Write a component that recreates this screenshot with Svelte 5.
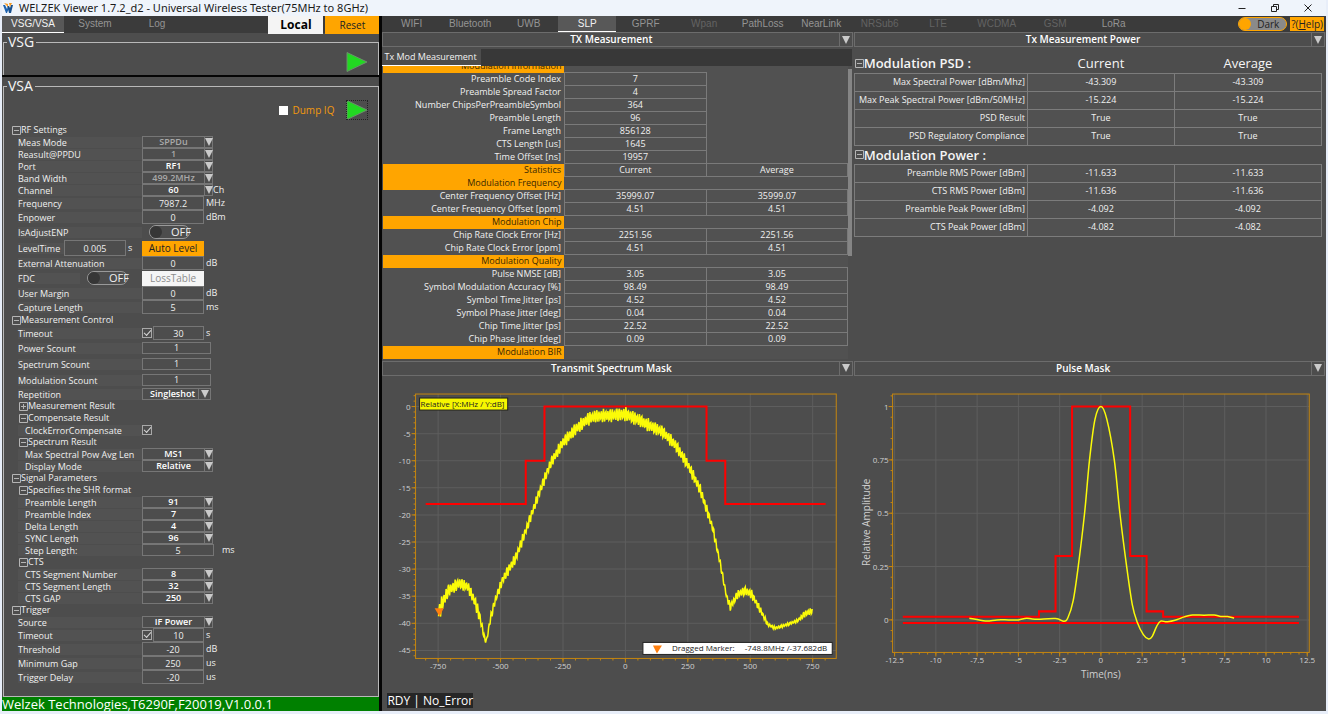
<script lang="ts">
	type Row = {
		kind: string;
		label: string;
		value?: string;
		unit?: string;
		level?: number;
		dim?: boolean;
		open?: boolean;
	};

	const settings: Row[] = [
		{ kind: 'group', label: 'RF Settings', open: true },
		{ kind: 'select', label: 'Meas Mode', value: 'SPPDu', dim: true },
		{ kind: 'select', label: 'Reasult@PPDU', value: '1', dim: true },
		{ kind: 'select', label: 'Port', value: 'RF1' },
		{ kind: 'select', label: 'Band Width', value: '499.2MHz', dim: true },
		{ kind: 'select', label: 'Channel', value: '60', unit: 'Ch' },
		{ kind: 'number', label: 'Frequency', value: '7987.2', unit: 'MHz' },
		{ kind: 'number', label: 'Enpower', value: '0', unit: 'dBm' },
		{ kind: 'toggle', label: 'IsAdjustENP' },
		{ kind: 'level', label: 'LevelTime', value: '0.005', unit: 's' },
		{ kind: 'number', label: 'External Attenuation', value: '0', unit: 'dB' },
		{ kind: 'fdc', label: 'FDC' },
		{ kind: 'number', label: 'User Margin', value: '0', unit: 'dB' },
		{ kind: 'number', label: 'Capture Length', value: '5', unit: 'ms' },
		{ kind: 'group', label: 'Measurement Control', open: true },
		{ kind: 'timeout', label: 'Timeout', value: '30', unit: 's' },
		{ kind: 'count', label: 'Power Scount', value: '1' },
		{ kind: 'count', label: 'Spectrum Scount', value: '1' },
		{ kind: 'count', label: 'Modulation Scount', value: '1' },
		{ kind: 'select', label: 'Repetition', value: 'Singleshot' },
		{ kind: 'group', label: 'Measurement Result', level: 1, open: false },
		{ kind: 'group', label: 'Compensate Result', level: 1, open: true },
		{ kind: 'check', label: 'ClockErrorCompensate', level: 1 },
		{ kind: 'group', label: 'Spectrum Result', level: 1, open: true },
		{ kind: 'select', label: 'Max Spectral Pow Avg Len', value: 'MS1', level: 1 },
		{ kind: 'select', label: 'Display Mode', value: 'Relative', level: 1 },
		{ kind: 'group', label: 'Signal Parameters', open: true },
		{ kind: 'group', label: 'Specifies the SHR format', level: 1, open: true },
		{ kind: 'select', label: 'Preamble Length', value: '91', level: 1 },
		{ kind: 'select', label: 'Preamble Index', value: '7', level: 1 },
		{ kind: 'select', label: 'Delta Length', value: '4', level: 1 },
		{ kind: 'select', label: 'SYNC Length', value: '96', level: 1 },
		{ kind: 'step', label: 'Step Length:', value: '5', unit: 'ms', level: 1 },
		{ kind: 'group', label: 'CTS', level: 1, open: true },
		{ kind: 'select', label: 'CTS Segment Number', value: '8', level: 1 },
		{ kind: 'select', label: 'CTS Segment Length', value: '32', level: 1 },
		{ kind: 'select', label: 'CTS GAP', value: '250', level: 1 },
		{ kind: 'group', label: 'Trigger', open: true },
		{ kind: 'select', label: 'Source', value: 'IF Power' },
		{ kind: 'timeout', label: 'Timeout', value: '10', unit: 's' },
		{ kind: 'number', label: 'Threshold', value: '-20', unit: 'dB' },
		{ kind: 'number', label: 'Minimum Gap', value: '250', unit: 'us' },
		{ kind: 'number', label: 'Trigger Delay', value: '-20', unit: 'us' }
	];

	const tabs = ['WIFI', 'Bluetooth', 'UWB', 'SLP', 'GPRF', 'Wpan', 'PathLoss', 'NearLink', 'NRSub6', 'LTE', 'WCDMA', 'GSM', 'LoRa'];
	const disabledTabs = ['Wpan', 'NRSub6', 'LTE', 'WCDMA', 'GSM'];
	let activeTab = $state('SLP');
	let activeSide = $state('VSG/VSA');

	// one value spans a single cell, two values are current and average
	const modulation: { name: string; values?: string[]; head?: boolean }[] = [
		{ name: 'Modulation Information', head: true },
		{ name: 'Preamble Code Index', values: ['7'] },
		{ name: 'Preamble Spread Factor', values: ['4'] },
		{ name: 'Number ChipsPerPreambleSymbol', values: ['364'] },
		{ name: 'Preamble Length', values: ['96'] },
		{ name: 'Frame Length', values: ['856128'] },
		{ name: 'CTS Length [us]', values: ['1645'] },
		{ name: 'Time Offset [ns]', values: ['19957'] },
		{ name: 'Statistics', head: true, values: ['Current', 'Average'] },
		{ name: 'Modulation Frequency', head: true },
		{ name: 'Center Frequency Offset [Hz]', values: ['35999.07', '35999.07'] },
		{ name: 'Center Frequency Offset [ppm]', values: ['4.51', '4.51'] },
		{ name: 'Modulation Chip', head: true },
		{ name: 'Chip Rate Clock Error [Hz]', values: ['2251.56', '2251.56'] },
		{ name: 'Chip Rate Clock Error [ppm]', values: ['4.51', '4.51'] },
		{ name: 'Modulation Quality', head: true },
		{ name: 'Pulse NMSE [dB]', values: ['3.05', '3.05'] },
		{ name: 'Symbol Modulation Accuracy [%]', values: ['98.49', '98.49'] },
		{ name: 'Symbol Time Jitter [ps]', values: ['4.52', '4.52'] },
		{ name: 'Symbol Phase Jitter [deg]', values: ['0.04', '0.04'] },
		{ name: 'Chip Time Jitter [ps]', values: ['22.52', '22.52'] },
		{ name: 'Chip Phase Jitter [deg]', values: ['0.09', '0.09'] },
		{ name: 'Modulation BIR', head: true }
	];

	const power = [
		{
			title: 'Modulation PSD :',
			rows: [
				['Max Spectral Power [dBm/Mhz]', '-43.309'],
				['Max Peak Spectral Power [dBm/50MHz]', '-15.224'],
				['PSD Result', 'True'],
				['PSD Regulatory Compliance', 'True']
			]
		},
		{
			title: 'Modulation Power :',
			rows: [
				['Preamble RMS Power [dBm]', '-11.633'],
				['CTS RMS Power [dBm]', '-11.636'],
				['Preamble Peak Power [dBm]', '-4.092'],
				['CTS Peak Power [dBm]', '-4.082']
			]
		}
	];

	const range = (from: number, to: number, step: number) =>
		Array.from({ length: Math.round((to - from) / step) + 1 }, (_, i) => from + i * step);

	const polyline = (points: number[][], fx: (v: number) => number, fy: (v: number) => number) =>
		points.map(([x, y]) => `${fx(x).toFixed(1)},${fy(y).toFixed(1)}`).join(' ');

	// transmit spectrum
	const sx = (mhz: number) => 242.5 + mhz * 0.2493;
	const sy = (db: number) => 30.5 - db * 5.41;
	const spectrumMask = [
		[-800, -18], [-399, -18], [-399, -10], [-324, -10], [-324, 0],
		[325, 0], [325, -10], [400, -10], [400, -18], [802, -18]
	];

	// MHz, level in dB, ripple in dB
	const envelope = [
		[-748, -38.2, 1], [-740, -37, 1.8], [-710, -34, 1.3], [-665, -32.6, 1.2], [-630, -33.3, 1],
		[-600, -36.3, 1.3], [-580, -39.4, 1.1], [-563, -43, 0.5], [-556, -43.2, 0.5], [-540, -39, 0.9],
		[-520, -35.5, 0.8], [-490, -31.8, 1], [-440, -28, 1.1], [-400, -23, 1], [-350, -16.5, 1],
		[-300, -10.5, 1.1], [-250, -6.6, 1.2], [-200, -4.2, 1.3], [-150, -2.3, 1.3], [-120, -1.8, 1.3],
		[-50, -1.6, 1.3], [0, -1.4, 1.4], [50, -2.4, 1.3], [100, -3.6, 1.3], [150, -4.7, 1.2],
		[200, -7.1, 1.2], [250, -10.7, 1.1], [300, -15.4, 1.1], [350, -22.5, 0.9], [380, -29, 0.7],
		[405, -35, 0.6], [420, -37, 0.8], [450, -34.6, 0.8], [480, -34, 0.9], [505, -34.6, 0.9],
		[540, -37.5, 0.7], [570, -40.2, 0.4], [600, -40.9, 0.3], [650, -40.2, 0.3], [690, -39.5, 0.3],
		[720, -38.2, 0.7], [748, -37.7, 0.6]
	];

	const spectrum = range(-748, 748, 2).map((f, i) => {
		const k = Math.max(1, envelope.findIndex((p) => p[0] >= f));
		const [a, b] = [envelope[k - 1], envelope[k]];
		const t = (f - a[0]) / (b[0] - a[0]);
		const level = a[1] + (b[1] - a[1]) * t;
		const ripple = a[2] + (b[2] - a[2]) * t;
		const wave = Math.sin((f * Math.PI * 2) / 9) * (0.8 + 0.2 * Math.sin(i * 12.9898));
		return [f, level + ripple * wave];
	});

	// pulse
	const px = (ns: number) => 246 + ns * 16.48;
	const py = (amp: number) => 243.5 - amp * 213;
	const pulseMask = [
		[-12, 0.015], [-3.75, 0.015], [-3.75, 0.04], [-2.75, 0.04], [-2.75, 0.3], [-1.75, 0.3], [-1.75, 1],
		[1.77, 1], [1.77, 0.3], [2.77, 0.3], [2.77, 0.04], [3.77, 0.04], [3.77, 0.015], [12, 0.015]
	];
	const pulse = [
		[-7.97, 0.008], [-7, -0.005], [-6.3, 0], [-5.6, 0], [-5, 0], [-4.5, 0.008], [-4, 0.003],
		[-2.75, 0.006], [-2.25, -0.006], [-2, 0.01], [-1.68, 0.09], [-1.375, 0.25], [-0.99, 0.5],
		[-0.69, 0.75], [-0.36, 0.94], [0, 1], [0.36, 0.94], [0.81, 0.75], [1.15, 0.5], [1.56, 0.25],
		[1.9, 0.072], [2.2, -0.011], [2.57, -0.069], [2.89, -0.09], [3.11, -0.077], [3.38, -0.03],
		[3.62, -0.006], [4.03, -0.009], [4.63, 0.002], [5.04, 0.014], [5.54, 0.023], [6.25, 0.022],
		[6.86, 0.023], [7.26, 0.016], [7.67, 0.016], [8.07, 0.008]
	];

	function smooth(points: number[][]) {
		const p = points.map(([x, y]) => [px(x), py(y)]);
		let d = `M${p[0].join(' ')}`;
		for (let i = 0; i < p.length - 1; i++) {
			const a = p[i - 1] ?? p[i];
			const b = p[i];
			const c = p[i + 1];
			const e = p[i + 2] ?? c;
			d += `C${b[0] + (c[0] - a[0]) / 6} ${b[1] + (c[1] - a[1]) / 6} ${c[0] - (e[0] - b[0]) / 6} ${c[1] - (e[1] - b[1]) / 6} ${c[0]} ${c[1]}`;
		}
		return d;
	}
</script>

{#snippet expander(open: boolean)}
	<svg class="expander" viewBox="0 0 9 9" aria-hidden="true">
		<path d={open ? 'M.5.5h8v8h-8zM2 4.5h5' : 'M.5.5h8v8h-8zM2 4.5h5M4.5 2v5'} />
	</svg>
{/snippet}

{#snippet caret()}
	<svg class="caret" viewBox="0 0 8 8" aria-hidden="true"><path d="M0 0h8L4 8z" /></svg>
{/snippet}

{#snippet play()}
	<svg viewBox="0 0 22 20" aria-hidden="true"><path d="M1 .5 21 10 1 19.5z" /></svg>
{/snippet}

{#snippet offSwitch(id: string)}
	<span class="switch">
		<input type="checkbox" role="switch" {id} />
		<span class="knob"></span>
		<span class="off">OFF</span>
	</span>
{/snippet}

{#snippet panelTitle(title: string)}
	<header class="panel-title">
		<h2>{title}</h2>
		<button aria-label="{title} options">{@render caret()}</button>
	</header>
{/snippet}

<div class="app">
	<header class="titlebar">
		<svg class="logo" viewBox="0 0 10 10" aria-hidden="true">
			<path d="M0 2h2l2 4 1-2 1 1-2 5H3z" fill="#1c62b0" />
			<path d="M4 3l2 0 1 2 1-3h2L8 10H6L5 6z" fill="#17508f" />
			<path d="M1 0l4 1 0 3-2-2zM6 0l3 0-2 4z" fill="#f59a23" />
		</svg>
		<h1>WELZEK Viewer 1.7.2_d2 - Universal Wireless Tester(75MHz to 8GHz)</h1>
		<div class="window-buttons">
			<button aria-label="Minimize"><svg viewBox="0 0 8 8"><path d="M.5 4.5h7" /></svg></button>
			<button aria-label="Restore">
				<svg viewBox="0 0 8 8"><path d="M.5 2.5h5v5h-5zM2.5 2V.5h5v5H6" /></svg>
			</button>
			<button aria-label="Close"><svg viewBox="0 0 8 8"><path d="M.5.5l7 7M7.5.5l-7 7" /></svg></button>
		</div>
	</header>

	<div class="workspace">
		<aside>
			<nav class="side-tabs">
				{#each ['VSG/VSA', 'System', 'Log'] as tab (tab)}
					<button class="tab" class:active={tab === activeSide} onclick={() => (activeSide = tab)}>{tab}</button>
				{/each}
				<button class="local">Local</button>
				<button class="reset">Reset</button>
			</nav>

			<fieldset class="vsg">
				<legend>VSG</legend>
				<button class="play" aria-label="Run VSG">{@render play()}</button>
			</fieldset>

			<div class="splitter"></div>

			<fieldset class="vsa">
				<legend>VSA</legend>
				<div class="run">
					<label><input type="checkbox" />Dump IQ</label>
					<button class="play focused" aria-label="Run VSA">{@render play()}</button>
				</div>

				<div class="tree">
					{#each settings as row, i (i)}
						{@const id = `setting-${i}`}
						<div class="row {row.kind}" class:nested={row.level}>
							{#if row.kind === 'group'}
								<button class="group-toggle" aria-expanded={row.open}>
									{@render expander(!!row.open)}{row.label}
								</button>
							{:else}
								<label for={id}>{row.label}</label>
								{#if row.kind === 'select'}
									<span class="combo" class:wide={row.label === 'Repetition'}>
										<select {id} class:dim={row.dim}><option>{row.value}</option></select>
										<span class="drop">{@render caret()}</span>
									</span>
								{:else if row.kind === 'toggle'}
									{@render offSwitch(id)}
								{:else if row.kind === 'fdc'}
									{@render offSwitch(id)}
									<button class="loss">LossTable</button>
								{:else if row.kind === 'check'}
									<input type="checkbox" class="tick" {id} checked />
								{:else}
									{#if row.kind === 'timeout'}
										<input type="checkbox" class="tick" aria-label="Use {row.label}" checked />
									{/if}
									<input type="text" {id} value={row.value} />
								{/if}
								{#if row.unit}<span class="unit">{row.unit}</span>{/if}
								{#if row.kind === 'level'}<button class="auto">Auto Level</button>{/if}
							{/if}
						</div>
					{/each}
				</div>
			</fieldset>

			<footer class="device">Welzek Technologies,T6290F,F20019,V1.0.0.1</footer>
		</aside>

		<main>
			<nav class="main-tabs">
				{#each tabs as tab (tab)}
					<button
						class="tab"
						class:active={tab === activeTab}
						disabled={disabledTabs.includes(tab)}
						onclick={() => (activeTab = tab)}>{tab}</button
					>
				{/each}
				<div class="tools">
					<button class="theme" role="switch" aria-checked="true"><i></i>Dark</button>
					<a class="help" href="#help">?(<u>H</u>elp)</a>
				</div>
			</nav>

			<section class="panel">
				{@render panelTitle('TX Measurement')}
				<div class="sub-tabs"><button>Tx Mod Measurement</button></div>
				<div class="scroll">
					<div class="viewport">
						<table class="modulation">
							<tbody>
								{#each modulation as row (row.name)}
									<tr class:head={row.head}>
										<th>{row.name}</th>
										{#if row.values}
											{#each row.values as value, i (i)}<td class="box">{value}</td>{/each}
											{#if row.values.length === 1}<td></td>{/if}
										{:else}
											<td colspan="2"></td>
										{/if}
									</tr>
								{/each}
							</tbody>
						</table>
					</div>
					<div class="thumb"></div>
				</div>
			</section>

			<section class="panel">
				{@render panelTitle('Tx Measurement Power')}
				<table class="power">
					{#each power as block, b (block.title)}
						<tbody>
							<tr class="block">
								<th><button>{@render expander(true)}{block.title}</button></th>
								<td>{b === 0 ? 'Current' : ''}</td>
								<td>{b === 0 ? 'Average' : ''}</td>
							</tr>
							{#each block.rows as [name, value] (name)}
								<tr>
									<th>{name}</th>
									<td>{value}</td>
									<td>{value}</td>
								</tr>
							{/each}
						</tbody>
					{/each}
				</table>
			</section>

			<section class="panel">
				{@render panelTitle('Transmit Spectrum Mask')}
				<svg class="chart" viewBox="0 0 470 313" preserveAspectRatio="xMidYMin meet">
					{#each range(-750, 750, 250) as f (f)}
						<path class="grid" d="M{sx(f)} 18V282" />
						<path class="axis" d="M{sx(f)} 282v4" />
						<text x={sx(f)} y="293" text-anchor="middle">{f}</text>
					{/each}
					{#each range(-800, 800, 50) as f (f)}
						<path class="axis" d="M{sx(f)} 282v2" />
					{/each}
					{#each range(-45, 0, 5) as db (db)}
						<path class="grid" d="M33 {sy(db)}H453" />
						<path class="axis" d="M33 {sy(db)}h-4" />
						<text x="28" y={sy(db) + 3} text-anchor="end">{db}</text>
					{/each}
					{#each range(-46, 2, 1) as db (db)}
						<path class="axis" d="M33 {sy(db)}h-2" />
					{/each}
					<rect class="frame" x="33" y="18" width="420" height="264" />
					<polyline class="mask" points={polyline(spectrumMask, sx, sy)} />
					<polyline class="trace" points={polyline(spectrum, sx, sy)} />
					<path class="marker" d="M52 232h9l-4 8z" />
					<rect class="note yellow" x="37" y="22" width="88" height="12" />
					<text class="ink" x="38" y="31">Relative [X:MHz / Y:dB]</text>
					<rect class="note" x="260" y="266" width="189" height="12" />
					<path class="marker" d="M270 269h9l-5 8z" />
					<text class="ink" x="289" y="275">Dragged Marker:</text>
					<text class="ink" x="444" y="275" text-anchor="end">-748.8MHz /-37.682dB</text>
				</svg>
			</section>

			<section class="panel">
				{@render panelTitle('Pulse Mask')}
				<svg class="chart" viewBox="0 0 470 313" preserveAspectRatio="xMidYMin meet">
					{#each range(-12.5, 12.5, 2.5) as ns (ns)}
						<path class="grid" d="M{px(ns)} 18V276" />
						<path class="axis" d="M{px(ns)} 276v4" />
						<text x={px(ns)} y="287" text-anchor="middle">{ns}</text>
					{/each}
					{#each range(-12.5, 12.5, 0.5) as ns (ns)}
						<path class="axis" d="M{px(ns)} 276v2" />
					{/each}
					{#each [0, 0.25, 0.5, 0.75, 1] as amp (amp)}
						<path class="grid" d="M38 {py(amp)}H454" />
						<path class="axis" d="M38 {py(amp)}h-4" />
						<text x="34" y={py(amp) + 3} text-anchor="end">{amp}</text>
					{/each}
					{#each range(-0.1, 1.05, 0.05) as amp (amp)}
						<path class="axis" d="M38 {py(amp)}h-2" />
					{/each}
					<rect class="frame" x="38" y="18" width="416" height="258" />
					<polyline class="mask" points={polyline(pulseMask, px, py)} />
					<path class="mask" d="M{px(-12)} {py(-0.015)}H{px(12)}" />
					<path class="trace" d={smooth(pulse)} />
					<text class="caption" x="246" y="302" text-anchor="middle">Time(ns)</text>
					<text class="caption" transform="translate(15 146) rotate(-90)" text-anchor="middle">Relative Amplitude</text>
				</svg>
			</section>

			<footer class="status"><span>RDY | No_Error</span></footer>
		</main>
	</div>
</div>

<style>
	:global(body) {
		background: #e8eef9;
	}

	.app {
		display: flex;
		flex-direction: column;
		height: 100vh;
		box-sizing: border-box;
		padding: 0 2px 3px;
		font: 9px/12px 'Open Sans', 'Noto Sans', sans-serif;
		color: #f0f0f0;
	}

	.app :global(*) {
		box-sizing: border-box;
	}

	button,
	input,
	select {
		margin: 0;
		padding: 0;
		border: 0;
		border-radius: 0;
		background: none;
		color: inherit;
		font: inherit;
	}

	h1,
	h2 {
		margin: 0;
	}

	.titlebar {
		flex: none;
		display: flex;
		align-items: center;
		gap: 6px;
		height: 16px;
		padding-left: 1px;
		background: #eff4fb;
		color: #1a1a1a;
	}

	.titlebar h1 {
		font-family: 'Noto Sans', sans-serif;
		font-size: 11px;
		font-weight: 400;
	}

	.logo {
		width: 10px;
		height: 10px;
	}

	.window-buttons {
		display: flex;
		gap: 25px;
		margin-left: auto;
		padding-right: 14px;
	}

	.window-buttons button {
		display: flex;
	}

	.window-buttons svg {
		width: 8px;
		height: 8px;
		fill: none;
		stroke: #222;
	}

	.workspace {
		flex: 1;
		min-height: 0;
		display: grid;
		grid-template-columns: minmax(0, 2fr) minmax(0, 5fr);
		grid-template-rows: minmax(0, 1fr);
		gap: 3px;
		background: #050505;
	}

	aside {
		display: flex;
		flex-direction: column;
		background: #4d4d4d;
	}

	.side-tabs,
	.main-tabs {
		flex: none;
		display: flex;
		height: 17px;
		background: #3b3b3b;
	}

	.tab {
		font: 10px/14px 'Liberation Sans', Arial, sans-serif;
		color: #949494;
		border-bottom: 1px solid transparent;
	}

	.tab:disabled {
		color: #636363;
	}

	.tab.active {
		background: #585858;
		border-color: #fff;
		color: #f2f2f2;
	}

	.side-tabs .tab {
		width: 62px;
	}

	.local {
		width: 55px;
		height: 18px;
		margin-left: auto;
		background: #f4f4f4;
		color: #000;
		font-size: 12px;
		font-weight: 700;
	}

	.reset {
		width: 54px;
		height: 18px;
		margin-left: 2px;
		background: #ffa500;
		color: #222;
		font-size: 10px;
	}

	fieldset {
		min-width: 0;
		margin: 0 0 0 1px;
		padding: 0;
		border: 1px solid #b9b9b9;
	}

	legend {
		margin-left: 3px;
		padding: 0 2px 0 1px;
		font-size: 14px;
		line-height: 18px;
		color: #f5f5f5;
	}

	.vsg {
		flex: none;
		height: 42px;
		border-bottom: 0;
	}

	.vsa {
		flex: 1;
	}

	.splitter {
		flex: none;
		height: 2px;
		background: #050505;
	}

	.play {
		display: block;
		width: 22px;
		height: 20px;
		margin: 1px 10px 0 auto;
	}

	.play svg {
		display: block;
		fill: #22d822;
		stroke: #6b8f6b;
	}

	.play.focused {
		margin: 0 10px 0 0;
		outline: 1px dotted #222;
		outline-offset: -1px;
	}

	.run {
		display: flex;
		justify-content: flex-end;
		align-items: center;
		gap: 12px;
		padding: 5px 0 4px;
	}

	.run label {
		display: flex;
		align-items: center;
		gap: 4px;
		font-size: 10px;
		color: #f39a0e;
	}

	.run input {
		appearance: none;
		width: 9px;
		height: 9px;
		background: #fff;
	}

	.tree {
		padding-left: 8px;
	}

	.row {
		display: flex;
		align-items: center;
		height: 12px;
	}

	.row.number,
	.row.timeout {
		height: 14px;
	}

	.row.toggle,
	.row.level,
	.row.fdc,
	.row.count {
		height: 16px;
	}

	.row > label {
		width: 130px;
		padding-left: 6px;
		background: linear-gradient(#525252, #525252) 6px 0 no-repeat;
		line-height: 11px;
		white-space: nowrap;
	}

	.row.nested > label {
		padding-left: 13px;
	}

	.group-toggle {
		display: flex;
		align-items: center;
	}

	.nested .group-toggle {
		margin-left: 7px;
	}

	.expander {
		flex: none;
		width: 9px;
		height: 9px;
		fill: none;
		stroke: #b5b5b5;
	}

	.caret {
		display: block;
		width: 8px;
		height: 8px;
		fill: #cacaca;
	}

	.row input[type='text'],
	select {
		width: 62px;
		height: 100%;
		border: 1px solid #767676;
		text-align: center;
	}

	.row.count input[type='text'] {
		width: 69px;
		height: 12px;
	}

	.row.step input[type='text'] {
		width: 72px;
	}

	.row.timeout input[type='text'] {
		width: 51px;
	}

	.combo {
		position: relative;
		display: flex;
		width: 71px;
		height: 12px;
	}

	.combo.wide {
		width: 69px;
	}

	select {
		appearance: none;
		width: 100%;
		padding-right: 8px;
		line-height: 10px;
		font-weight: 600;
		text-align-last: center;
		color: #fff;
	}

	select.dim {
		color: #a9a9a9;
	}

	option {
		color: #000;
	}

	.drop {
		position: absolute;
		inset: 0 0 0 auto;
		display: flex;
		align-items: center;
		border-left: 1px solid #767676;
		pointer-events: none;
	}

	.wide .drop {
		padding: 0 2px;
	}

	.unit {
		padding-left: 2px;
	}

	.select .unit {
		padding-left: 0;
	}

	.step .unit {
		padding-left: 8px;
	}

	.tick {
		appearance: none;
		display: grid;
		place-items: center;
		width: 10px;
		height: 10px;
		margin-right: 1px;
		border: 1px solid #a8a8a8;
	}

	.tick:checked::after {
		content: '';
		width: 6px;
		height: 3px;
		margin-bottom: 2px;
		border: solid #d8d8d8;
		border-width: 0 0 1px 1px;
		transform: rotate(-48deg);
	}

	.switch {
		position: relative;
		display: flex;
		align-items: center;
		width: 43px;
		height: 14px;
		margin-left: 7px;
	}

	.switch input {
		appearance: none;
		width: 41px;
		height: 14px;
		border: 1px solid #999;
		border-radius: 7px;
	}

	.knob {
		position: absolute;
		left: 1px;
		width: 12px;
		height: 12px;
		border-radius: 50%;
		background: #363636;
		pointer-events: none;
	}

	.off {
		position: absolute;
		left: 22px;
		font-size: 11px;
		color: #f0f0f0;
		pointer-events: none;
	}

	.row.fdc > label {
		width: 68px;
	}

	.fdc .loss,
	.level .auto {
		width: 62px;
		height: 15px;
		font-size: 10px;
	}

	.fdc .loss {
		margin-left: 12px;
		background: #f5f5f5;
		color: #8c8c8c;
	}

	.row.level > label {
		width: 52px;
	}

	.level .unit {
		width: 16px;
	}

	.level .auto {
		background: #ffa500;
		color: #222;
	}

	.device {
		flex: none;
		height: 14px;
		background: #008000;
		color: #fff;
		font-size: 13px;
		line-height: 14px;
		white-space: nowrap;
	}

	main {
		display: grid;
		grid-template-columns: minmax(0, 1fr) minmax(0, 1fr);
		grid-template-rows: 16px minmax(0, 1fr) minmax(0, 1fr) 22px;
		background: #4d4d4d;
	}

	.main-tabs {
		grid-column: 1 / -1;
		height: 16px;
	}

	.main-tabs .tab {
		width: 6.2%;
	}

	.tools {
		flex: 1;
		display: flex;
		justify-content: flex-end;
		align-items: center;
		gap: 3px;
		padding-right: 2px;
		font-size: 10px;
		color: #222;
	}

	.theme {
		display: flex;
		align-items: center;
		gap: 6px;
		width: 49px;
		height: 14px;
		border: 1px solid #ffa500;
		border-radius: 7px;
		background: #8a8a8a;
	}

	.theme i {
		width: 12px;
		height: 12px;
		border-radius: 50%;
		background: #ffa500;
	}

	.help {
		padding: 0 1px;
		background: #ffa500;
		color: #222;
		line-height: 14px;
		text-decoration: none;
	}

	.panel {
		display: flex;
		flex-direction: column;
		min-height: 0;
	}

	.panel-title {
		flex: none;
		display: flex;
		height: 15px;
		margin-right: 1px;
		border: 1px solid #6c6c6c;
	}

	.panel-title h2 {
		flex: 1;
		font-size: 10px;
		font-weight: 600;
		line-height: 13px;
		text-align: center;
		color: #fff;
	}

	.panel-title button {
		display: grid;
		place-items: center;
		width: 13px;
		border-left: 1px solid #6c6c6c;
	}

	.sub-tabs {
		flex: none;
		display: flex;
		height: 17px;
		margin: 2px 2px 0 0;
		background: #383838;
	}

	.sub-tabs button {
		padding: 0 4px 0 2px;
		border-bottom: 1px solid #fff;
		background: #4d4d4d;
		color: #f2f2f2;
	}

	.scroll {
		flex: 1;
		display: flex;
		min-height: 0;
		padding: 0 2px 2px 1px;
	}

	/* keeps the last row against the bottom edge */
	.viewport {
		flex: 1;
		display: flex;
		flex-direction: column;
		justify-content: flex-end;
		overflow: hidden;
		background: #515151;
	}

	.thumb {
		width: 4px;
		height: 64%;
		margin-top: 3px;
		background: #858585;
	}

	table {
		width: 100%;
		border-collapse: collapse;
		table-layout: fixed;
	}

	th,
	td {
		height: 13px;
		padding: 0;
		font-weight: 400;
		line-height: 12px;
		text-align: center;
		white-space: nowrap;
	}

	th {
		padding-right: 2px;
		text-align: right;
	}

	.modulation th {
		width: 39%;
		padding-right: 3px;
	}

	.modulation .box {
		border: 1px solid #7a7a7a;
	}

	.modulation .head th {
		background: #ffa500;
		color: #3a2800;
	}

	.power {
		width: calc(100% - 4px);
		margin-top: 7px;
	}

	.power th {
		width: 37%;
	}

	.power th,
	.power td {
		height: 18px;
		border: 1px solid #7c7c7c;
		background: #515151;
	}

	.power .block th,
	.power .block td {
		height: 19px;
		border-width: 0 0 1px;
		background: none;
		font-size: 13px;
		color: #f5f5f5;
	}

	.block button {
		display: flex;
		align-items: center;
		font-weight: 600;
	}

	.chart {
		flex: 1;
		min-height: 0;
		width: 100%;
	}

	.chart text {
		font-size: 8px;
		fill: #d0d0d0;
	}

	.chart .caption {
		font-size: 10px;
	}

	.chart .ink {
		fill: #222;
	}

	.grid {
		stroke: #5e5e5e;
	}

	.axis,
	.frame {
		fill: none;
		stroke: #c5860f;
	}

	.mask,
	.trace {
		fill: none;
		stroke: #ff0000;
		stroke-width: 1.5;
	}

	.mask {
		stroke-width: 2;
	}

	.trace {
		stroke: #fbfb08;
	}

	.marker {
		fill: #ff7f0e;
	}

	.note {
		fill: #fff;
		stroke: #222;
	}

	.note.yellow {
		fill: #f6f600;
	}

	.status {
		grid-column: 1 / -1;
		display: flex;
		align-items: center;
		padding-left: 5px;
		font-size: 12px;
		line-height: 15px;
		color: #fff;
	}

	.status span {
		background: #262626;
	}
</style>
